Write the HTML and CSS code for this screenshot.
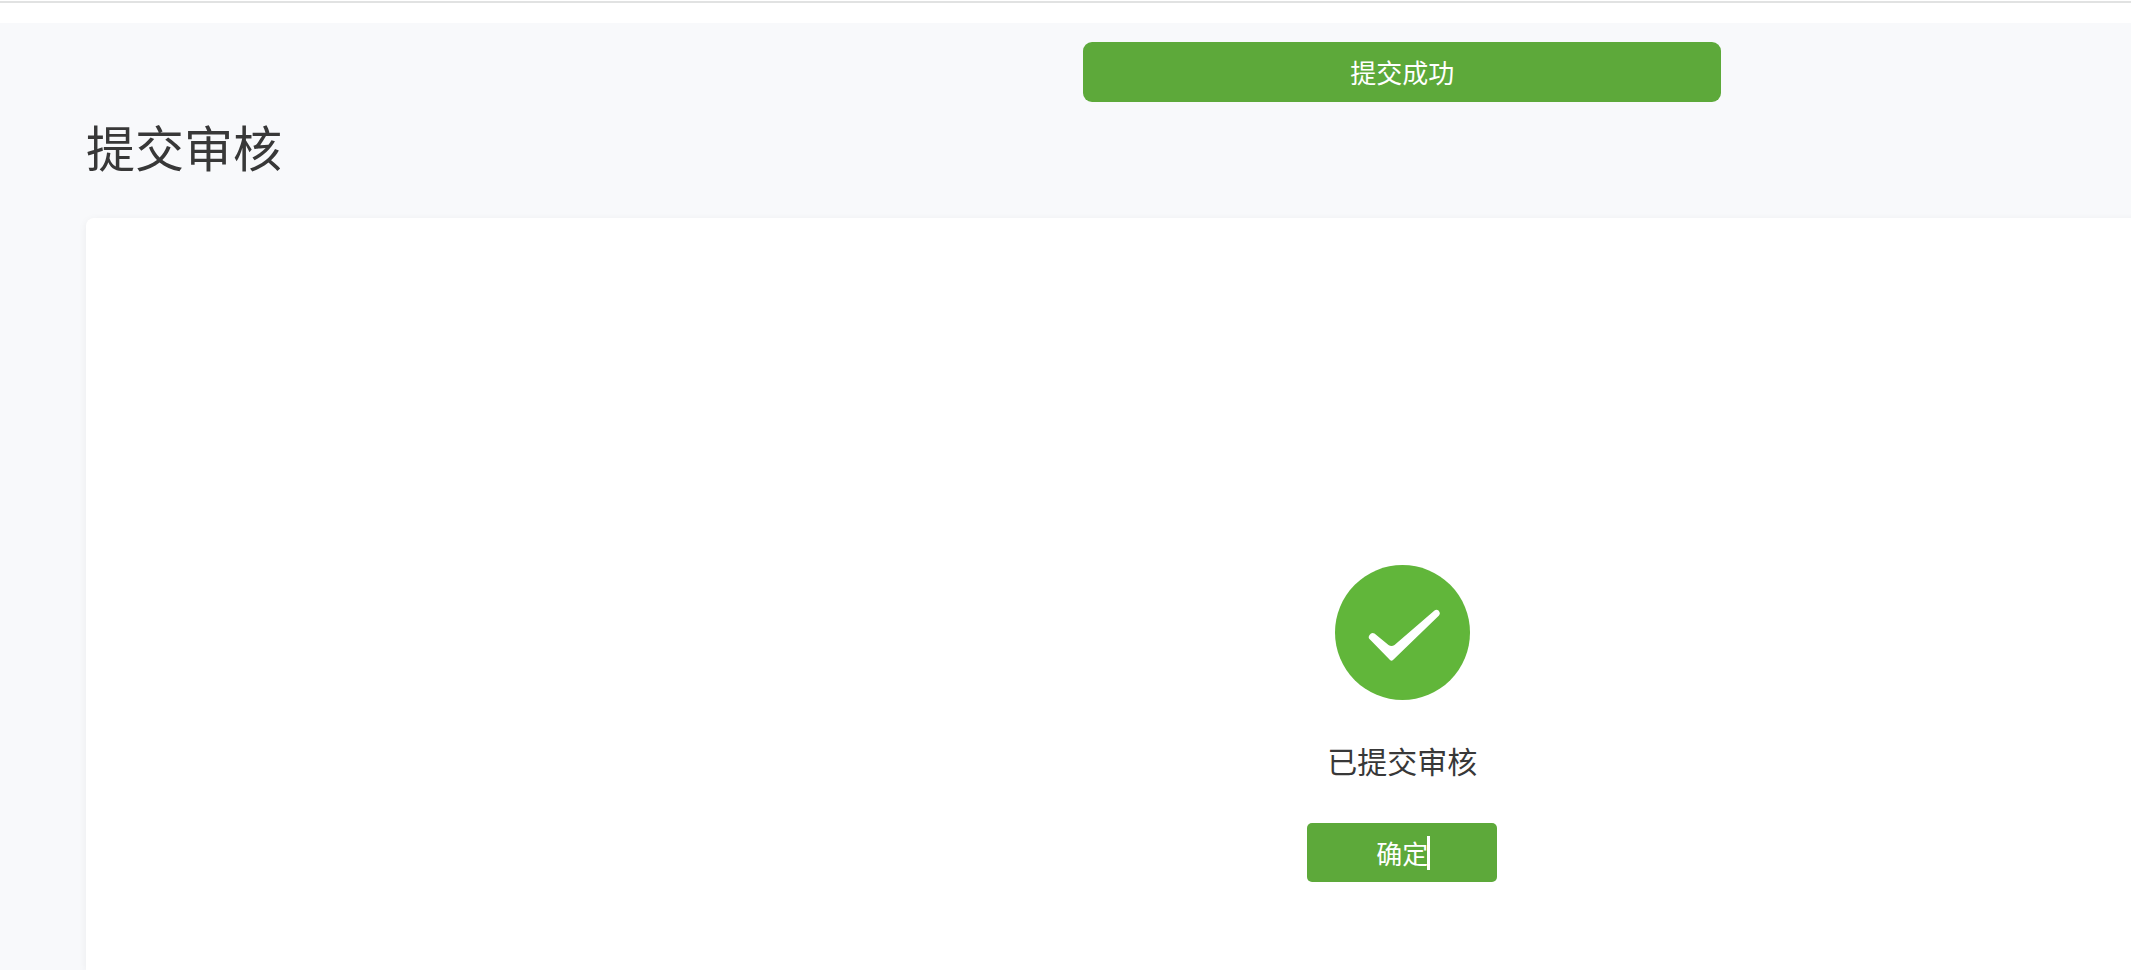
FILE: index.html
```html
<!DOCTYPE html>
<html lang="zh-CN">
<head>
<meta charset="utf-8">
<meta name="viewport" content="width=device-width, initial-scale=1">
<title>提交审核</title>
<link rel="stylesheet" href="styles.css">
</head>
<body>
<div class="viewport">
  <div class="page">
    <header class="topbar"></header>
    <div class="toast" role="status">提交成功</div>
    <main class="content">
      <h1 class="title">提交审核</h1>
      <section class="card">
        <svg class="icon" viewBox="0 0 135 135" aria-hidden="true">
          <circle cx="67.5" cy="67.5" r="67.5" fill="#61b63a"/>
          <path d="M34 73.500Q33 72 34.500 70L36 68.500Q37.500 67.300 39.500 68.500L53.500 80Q56.500 82 59.500 80L99.500 45.500Q101.500 44 103.500 45.500L104.500 47Q105.500 48.500 104 50.500L58 95Q56.500 96.500 55 95Z" fill="#fff"/>
        </svg>
        <p class="message">已提交审核</p>
        <button class="confirm" type="button"><span class="label">确定<span class="caret"></span></span></button>
      </section>
    </main>
  </div>
</div>
</body>
</html>
```
FILE: styles.css
```css
* {
  box-sizing: border-box;
}

body {
  margin: 0;
  background: #f8f9fb;
  color: #383838;
  font-family: "Noto Sans CJK SC", sans-serif;
}

.viewport {
  height: 100vh;
  overflow: hidden;
}

/* The page is wider than the window; its right side is cut off. */
.page {
  position: relative;
  display: flex;
  flex-direction: column;
  width: 131.6%;
  min-height: 100%;
}

.topbar {
  height: 23px;
  border-top: 1px solid #fff;
  background: #fff;
}

.topbar::before {
  content: "";
  display: block;
  height: 2px;
  background: #e1e2e2;
}

.toast {
  position: absolute;
  top: 42px;
  left: 50%;
  width: 638px;
  transform: translateX(-50%);
  border-radius: 9px;
  background: #5da93a;
  color: #fff;
  font-size: 26px;
  line-height: 60px;
  text-align: center;
}

.content {
  display: flex;
  flex: 1;
  flex-direction: column;
  padding: 87px 86px 0;
}

.title {
  margin: 0 0 36px;
  font-size: 49px;
  font-weight: 400;
  line-height: 72px;
}

.card {
  display: flex;
  flex: 1;
  flex-direction: column;
  align-items: center;
  padding: 346px 40px 80px;
  border-radius: 8px 8px 0 0;
  background: #fff;
  box-shadow: 0 2px 8px rgba(0, 0, 0, 0.06);
}

.icon {
  width: 135px;
  height: 135px;
  margin-top: 1px;
}

.message {
  margin: 38px 0 40px;
  font-size: 30px;
  line-height: 45px;
}

.confirm {
  width: 190px;
  height: 59px;
  padding: 0;
  border: 0;
  border-radius: 5px;
  background: #5da93a;
  color: #fff;
  font-family: inherit;
  font-size: 26px;
  line-height: 58px;
}

.label {
  position: relative;
  display: inline-block;
}

.caret {
  position: absolute;
  top: 12px;
  right: -2px;
  width: 3px;
  height: 34px;
  background: #fff;
}
```
